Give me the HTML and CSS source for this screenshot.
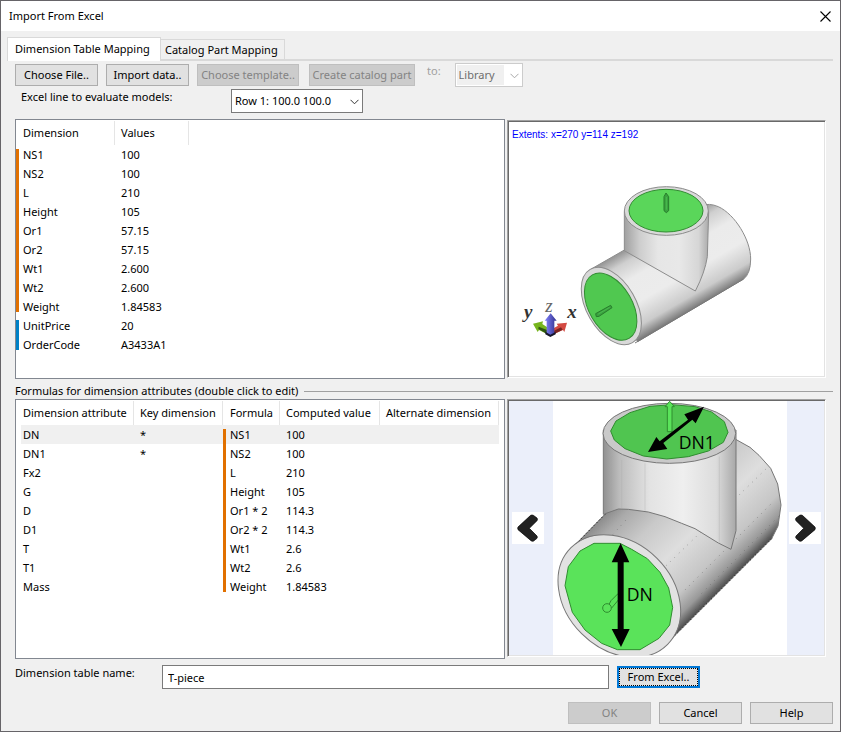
FILE: index.html
```html
<!DOCTYPE html>
<html lang="en">
<head>
<meta charset="utf-8">
<title>Import From Excel</title>
<link rel="stylesheet" href="styles.css">
</head>
<body>
<main class="dialog">
  <header class="titlebar">
    <h1>Import From Excel</h1>
    <button class="close" type="button" aria-label="Close">
      <svg width="11" height="11" viewBox="0 0 11 11"><path d="M.5 .5l10 10M10.5 .5l-10 10" stroke="#000" stroke-width="1.1" fill="none"/></svg>
    </button>
  </header>

  <div class="tabs" role="tablist">
    <button class="tab active" type="button" role="tab" aria-selected="true">Dimension Table Mapping</button>
    <button class="tab" type="button" role="tab" aria-selected="false">Catalog Part Mapping</button>
  </div>

  <form class="content">
    <div class="toolbar">
      <button class="btn" type="button">Choose File..</button>
      <button class="btn" type="button">Import data..</button>
      <button class="btn template" type="button" disabled>Choose template..</button>
      <button class="btn catalog" type="button" disabled>Create catalog part</button>
      <label class="to" for="target">to:</label>
      <span class="combo library">
        <select id="target" disabled><option>Library</option></select>
        <svg width="9" height="6" viewBox="0 0 9 6"><path d="M.5 .8l4 4 4-4" stroke="#a8a8a8" fill="none"/></svg>
      </span>
    </div>

    <div class="linepick">
      <label for="row">Excel line to evaluate models:</label>
      <span class="combo">
        <select id="row"><option>Row 1: 100.0 100.0</option></select>
        <svg width="9" height="6" viewBox="0 0 9 6"><path d="M.5 .8l4 4 4-4" stroke="#333" fill="none"/></svg>
      </span>
    </div>

    <section class="split">
      <div class="list">
        <table class="values">
          <colgroup><col class="c-name"><col class="c-value"></colgroup>
          <thead><tr><th>Dimension</th><th>Values</th></tr></thead>
          <tbody>
            <tr><td class="mark first">NS1</td><td>100</td></tr>
            <tr><td class="mark">NS2</td><td>100</td></tr>
            <tr><td class="mark">L</td><td>210</td></tr>
            <tr><td class="mark">Height</td><td>105</td></tr>
            <tr><td class="mark">Or1</td><td>57.15</td></tr>
            <tr><td class="mark">Or2</td><td>57.15</td></tr>
            <tr><td class="mark">Wt1</td><td>2.600</td></tr>
            <tr><td class="mark">Wt2</td><td>2.600</td></tr>
            <tr><td class="mark last">Weight</td><td>1.84583</td></tr>
            <tr><td class="mark blue first">UnitPrice</td><td>20</td></tr>
            <tr><td class="mark blue last">OrderCode</td><td>A3433A1</td></tr>
          </tbody>
        </table>
      </div>
      <div class="view">
        <p class="extents">Extents: x=270 y=114 z=192</p>
        <svg class="model" viewBox="12 21 945 762" role="img" aria-label="T-piece model">
          <defs>
            <linearGradient id="run" gradientUnits="userSpaceOnUse" x1="275" y1="457" x2="402" y2="677">
              <stop offset="0" stop-color="#9a9a9a"/><stop offset=".12" stop-color="#cfcfcf"/><stop offset=".32" stop-color="#ebebeb"/><stop offset=".6" stop-color="#ececec"/><stop offset=".85" stop-color="#cbcbcb"/><stop offset="1" stop-color="#777"/>
            </linearGradient>
            <linearGradient id="branch" gradientUnits="userSpaceOnUse" x1="358" y1="0" x2="611" y2="0">
              <stop offset="0" stop-color="#a0a0a0"/><stop offset=".18" stop-color="#cdcdcd"/><stop offset=".4" stop-color="#e6e6e6"/><stop offset=".65" stop-color="#e8e8e8"/><stop offset=".88" stop-color="#d6d6d6"/><stop offset="1" stop-color="#aaa"/>
            </linearGradient>
            <linearGradient id="blueAxis"><stop offset="0" stop-color="#8484ff"/><stop offset="1" stop-color="#30308c"/></linearGradient>
          </defs>
          <g stroke="#8c8c8c" stroke-width="3" stroke-linejoin="round">
            <path d="M257 463L590 272Q612 263 640 275C690 298 737 375 737 432Q737 475 716 492L398 680Z" fill="url(#run)"/>
            <path d="M716 492L390 684" stroke="#777"/>
            <ellipse cx="319" cy="573" rx="127" ry="74" transform="rotate(60 319 573)" fill="#d9d9d9"/>
            <ellipse cx="317" cy="575" rx="110" ry="65" transform="rotate(60 317 575)" fill="#50c850" stroke="#328c32"/>
            <path d="M358 290V407L571 528Q600 472 607 425L611 290Z" fill="url(#branch)"/>
            <ellipse cx="484" cy="288" rx="126" ry="73" fill="#d9d9d9"/>
            <ellipse cx="483" cy="287" rx="111" ry="64" fill="#5ad65a" stroke="#328c32"/>
          </g>
          <g fill="#39a33f" stroke="#287c2c" stroke-width="3">
            <path d="M477 245l6-11 8 11v42l-7 6-7-6z"/>
            <path d="M272 596l45-25 4 7-39 26-8 1z"/>
            <path d="M484 246v38M280 597l34-20" stroke="#6fe86f" stroke-width="1"/>
          </g>
          <g class="axis-names">
            <text x="57" y="608">y</text><text class="thin" x="121" y="590">z</text><text x="187" y="609">x</text>
          </g>
          <path d="M136 662l-34-17-4 6-14-25 30-7-2 8 26 17z" fill="#76b51d"/>
          <path d="M136 662l-36-20 1-7 35 14z" fill="#2f5712"/>
          <path d="M136 662l38-17 4 6 8-28-31 3 4 6-23 13z" fill="#d34a42"/>
          <path d="M136 662l37-18-5-7-32 16z" fill="#782421"/>
          <path d="M125 658v-41h-6l18-22 18 22h-7v41l-12 6z" fill="url(#blueAxis)"/>
          <path d="M121 650l15 9 16-8v7l-16 8-15-8z" fill="#16162b"/>
        </svg>
      </div>
    </section>

    <fieldset class="formulas">
      <legend>Formulas for dimension attributes (double click to edit)</legend>
      <div class="split">
        <div class="list inset">
          <table class="attributes">
            <colgroup><col class="c-attr"><col class="c-key"><col class="c-formula"><col class="c-computed"><col class="c-alt"></colgroup>
            <thead><tr><th>Dimension attribute</th><th>Key dimension</th><th>Formula</th><th>Computed value</th><th>Alternate dimension</th></tr></thead>
            <tbody>
              <tr class="selected"><td>DN</td><td>*</td><td class="mark first">NS1</td><td>100</td><td></td></tr>
              <tr><td>DN1</td><td>*</td><td class="mark">NS2</td><td>100</td><td></td></tr>
              <tr><td>Fx2</td><td></td><td class="mark">L</td><td>210</td><td></td></tr>
              <tr><td>G</td><td></td><td class="mark">Height</td><td>105</td><td></td></tr>
              <tr><td>D</td><td></td><td class="mark">Or1 * 2</td><td>114.3</td><td></td></tr>
              <tr><td>D1</td><td></td><td class="mark">Or2 * 2</td><td>114.3</td><td></td></tr>
              <tr><td>T</td><td></td><td class="mark">Wt1</td><td>2.6</td><td></td></tr>
              <tr><td>T1</td><td></td><td class="mark">Wt2</td><td>2.6</td><td></td></tr>
              <tr><td>Mass</td><td></td><td class="mark last">Weight</td><td>1.84583</td><td></td></tr>
            </tbody>
          </table>
        </div>
        <div class="view gallery">
          <button class="step" type="button" aria-label="Previous picture">
            <svg width="32" height="32" viewBox="21 396 96 96"><path d="M39 441L77 406q4-2 8 0l11 8q3 4 0 8L73 445l23 23q2 4 0 7l-10 8q-4 2-8-1L39 449q-2-4 0-8z" fill="#222" stroke="#000" stroke-width="2"/></svg>
          </button>
          <svg class="picture" viewBox="144 63 702 762" role="img" aria-label="DN and DN1 of the T-piece">
            <defs>
              <linearGradient id="bigRun" gradientUnits="userSpaceOnUse" x1="215" y1="490" x2="500" y2="775">
                <stop offset="0" stop-color="#8d8d8d"/><stop offset=".1" stop-color="#aaa"/><stop offset=".3" stop-color="#c9c9c9"/><stop offset=".55" stop-color="#dedede"/><stop offset=".8" stop-color="#c6c6c6"/><stop offset=".92" stop-color="#999"/><stop offset="1" stop-color="#4e4e4e"/>
              </linearGradient>
              <linearGradient id="bigBranch" gradientUnits="userSpaceOnUse" x1="295" y1="0" x2="693" y2="0">
                <stop offset="0" stop-color="#919191"/><stop offset=".12" stop-color="#bcbcbc"/><stop offset=".35" stop-color="#e3e3e3"/><stop offset=".6" stop-color="#efefef"/><stop offset=".85" stop-color="#dcdcdc"/><stop offset="1" stop-color="#a8a8a8"/>
              </linearGradient>
            </defs>
            <g stroke="#777" stroke-width="3" stroke-linejoin="round">
              <path d="M205 500L300 403L600 178H692L735 202L762 226L797 265L818 312L828 375L819 438L800 476L498 778Z" fill="url(#bigRun)"/>
              <path d="M540 630L800 370M590 640L820 410M470 570L790 260M300 490L370 412M570 690L810 452M540 735L800 476" fill="none" stroke="#555" stroke-width="2" stroke-dasharray="2 16"/>
              <path d="M800 476L498 778M205 500L300 403" fill="none" stroke="#222" stroke-dasharray="4 7"/>
              <ellipse cx="343" cy="648" rx="205" ry="160" transform="rotate(45 343 648)" fill="#e2e2e2"/>
              <path d="M267 490H345L380 508L427 536L465 577L491 624L503 682L494 735L462 775L405 809H337L290 790L240 750L202 697L180 617L190 560L225 513Z" fill="#5ae35a" stroke="#2f8d2f"/>
              <path d="M295 150V403L340 387L370 388L430 396L480 410L530 430L570 446L640 489L678 508L693 452V150Z" fill="url(#bigBranch)"/>
              <path d="M322 230V390M350 240V386M420 250V393M643 230V488" fill="none" stroke="#aaa" stroke-width="1"/>
              <ellipse cx="493" cy="160" rx="199" ry="90" fill="#c9c9c9"/>
              <path d="M317 153L333 123L375 98L435 79L500 74L570 80L620 96L658 125L669 157L655 187L610 213L550 230L485 237L415 228L360 206L328 180Z" fill="#50c550" stroke="#2f8d2f"/>
              <path d="M487 155V80h-7l14-16 14 16h-7v75z" fill="#5ae35a" stroke="#2f8d2f"/>
              <path d="M340 640l-22 22-7 13M340 660l-20 24" fill="none" stroke="#2f8d2f"/>
              <circle cx="306" cy="684" r="13" fill="#5ae35a" stroke="#2f8d2f"/>
            </g>
            <path d="M347 490l26 57h-17v200h18l-26 54-28-54h18V547h-18z"/>
            <path d="M429 216L454 171L464 184L549 119L538 103L597 80L572 130L562 119L475 189L487 207Z"/>
            <g class="names"><text x="521" y="207">DN1</text><text x="365" y="662">DN</text></g>
          </svg>
          <button class="step" type="button" aria-label="Next picture">
            <svg width="32" height="32" viewBox="852 396 96 96"><path d="M930 441L892 406q-4-2-8 0l-11 8q-3 4 0 8L896 445l-23 23q-2 4 0 7l10 8q4 2 8-1L930 449q2-4 0-8z" fill="#222" stroke="#000" stroke-width="2"/></svg>
          </button>
        </div>
      </div>
    </fieldset>

    <div class="namerow">
      <label for="name">Dimension table name:</label>
      <input id="name" type="text" value="T-piece">
      <button class="btn focused" type="button">From Excel..</button>
    </div>

    <footer class="actions">
      <button class="btn" type="button" disabled>OK</button>
      <button class="btn" type="button">Cancel</button>
      <button class="btn" type="button">Help</button>
    </footer>
  </form>
</main>
</body>
</html>
```
FILE: styles.css
```css
* { box-sizing: border-box; }

body {
  margin: 0;
  font: 11px/16px "Noto Sans", "Open Sans", sans-serif;
  color: #000;
}

button, select, input { font: inherit; color: inherit; }

.dialog {
  display: flex;
  flex-direction: column;
  min-height: 100vh;
  border: 1px solid #666468;
  background: #f0f0f0;
}

.titlebar {
  display: flex;
  justify-content: space-between;
  align-items: center;
  height: 30px;
  padding: 0 9px 0 8px;
  background: #fff;
}
h1 { margin: 0; font-size: inherit; font-weight: 400; }
.close { display: flex; padding: 0; border: 0; background: none; }

.tabs {
  display: flex;
  align-items: flex-end;
  margin: 6px 7px 0 6px;
  height: 24px;
  border-bottom: 2px solid #d9d9d9;
}
.tab {
  width: 124px;
  height: 20px;
  padding: 0 4px;
  border: 1px solid #d9d9d9;
  border-left: 0;
  border-bottom: 0;
  background: #f0f0f0;
  text-align: left;
  white-space: nowrap;
}
.tab.active {
  width: 154px;
  height: 24px;
  margin-bottom: -2px;
  padding: 0 7px 2px;
  border-left: 1px solid #d9d9d9;
  background: #fff;
}

.content {
  display: flex;
  flex: 1;
  flex-direction: column;
  padding: 2px 7px 7px 14px;
}

.toolbar { display: flex; align-items: center; gap: 8px; height: 24px; }
.btn {
  flex: none;
  width: 83px;
  height: 22px;
  padding: 0;
  border: 1px solid #adadad;
  background: #e1e1e1;
  white-space: nowrap;
}
.btn:disabled { border-color: #bfbfbf; background: #ccc; color: #838383; }
.template { width: 102px; }
.catalog { width: 106px; margin-left: 2px; }
.to { align-self: flex-start; margin-left: 4px; color: #a0a0a0; }

.combo { position: relative; width: 132px; height: 24px; }
.combo select {
  display: block;
  width: 100%;
  height: 100%;
  padding: 0 3px;
  border: 1px solid #7a7a7a;
  border-radius: 0;
  background: #fff;
  appearance: none;
}
.combo svg { position: absolute; right: 4px; top: 10px; }
.combo.library { width: 68px; margin-left: 6px; }
.combo.library select {
  border-color: #ccc;
  background: linear-gradient(#f0f0f0, #f0f0f0) 1px 1px / 47px 20px no-repeat #fff;
  color: #6d6d6d;
  opacity: 1;
}

.linepick { display: flex; height: 24px; margin: 2px 0 6px; padding-left: 6px; }
.linepick label { width: 210px; }

.split {
  display: grid;
  grid-template-columns: 490fr 319fr;
  align-items: center;
  gap: 2px;
  padding-right: 7px;
}
.list {
  align-self: stretch;
  min-width: 0;
  min-height: 260px;
  padding-top: 1px;
  border: 1px solid #828790;
  background: #fff;
}
.inset { padding-left: 5px; }
table { table-layout: fixed; border-collapse: separate; border-spacing: 0; }
.values { width: 173px; }
.attributes { width: 478px; }
.c-name { width: 99px; }
.c-value { width: 74px; }
.c-attr { width: 113px; }
.c-key { width: 89px; }
.c-formula { width: 57px; }
.c-computed { width: 100px; }
.c-alt { width: 119px; }
th, td { padding: 0 0 0 6px; text-align: left; font-weight: 400; white-space: nowrap; }
th { height: 24px; border-right: 1px solid #e5e5e5; }
td { height: 19px; }
.values th:first-child, .values td:first-child { padding-left: 7px; }
.attributes th:first-child, .attributes td:first-child { padding-left: 2px; }
.attributes .mark, .attributes th:nth-child(3) { padding-left: 7px; }
.selected { background: #f0f0f0; }
.mark { background: linear-gradient(#e17000, #e17000) 0 0 / 3px 100% no-repeat; }
.mark.blue { background-image: linear-gradient(#0081c6, #0081c6); }
.mark.first { background-position: 0 4px; }
.mark.last { background-size: 3px 15px; }

.view {
  position: relative;
  height: 258px;
  padding: 1px;
  border: 1px solid;
  border-color: #a0a0a0 #fff #fff #a0a0a0;
  background: #fff;
  box-shadow: inset 1px 1px #696969, inset -1px -1px #e3e3e3;
}
.extents {
  position: absolute;
  left: 4px;
  top: 6px;
  margin: 0;
  font: 10px/16px "Liberation Sans", sans-serif;
  color: #00f;
}
.model { display: block; width: 100%; height: 100%; }
.axis-names { font: italic bold 57px "Liberation Serif", serif; fill: #333; }
.thin { font-weight: 400; fill: #666; }

.formulas { min-width: 0; margin: 4px 0 0; padding: 0; border: 0; border-top: 1px solid #a0a0a0; }
legend { padding: 0 6px 0 0; }

.gallery {
  display: flex;
  align-self: start;
  justify-content: space-between;
  align-items: center;
  padding: 1px 4px;
  background: #ebeffa;
}
.step { display: flex; padding: 0; border: 0; background: #fff; }
.picture { width: 234px; height: 254px; margin-left: 6px; background: #fff; }
.names { font: 53px "Open Sans", sans-serif; }

.namerow { display: flex; align-items: center; gap: 8px; margin: 6px 0 13px; padding-right: 133px; }
.namerow label { align-self: flex-start; width: 139px; }
.namerow input { flex: 1; min-width: 0; height: 24px; padding: 0 5px; border: 1px solid #7a7a7a; background: #fff; }
.focused { border: 2px solid #0078d7; outline: 1px dotted #000; outline-offset: -3px; }

.actions { display: flex; justify-content: flex-end; gap: 8px; }
```
